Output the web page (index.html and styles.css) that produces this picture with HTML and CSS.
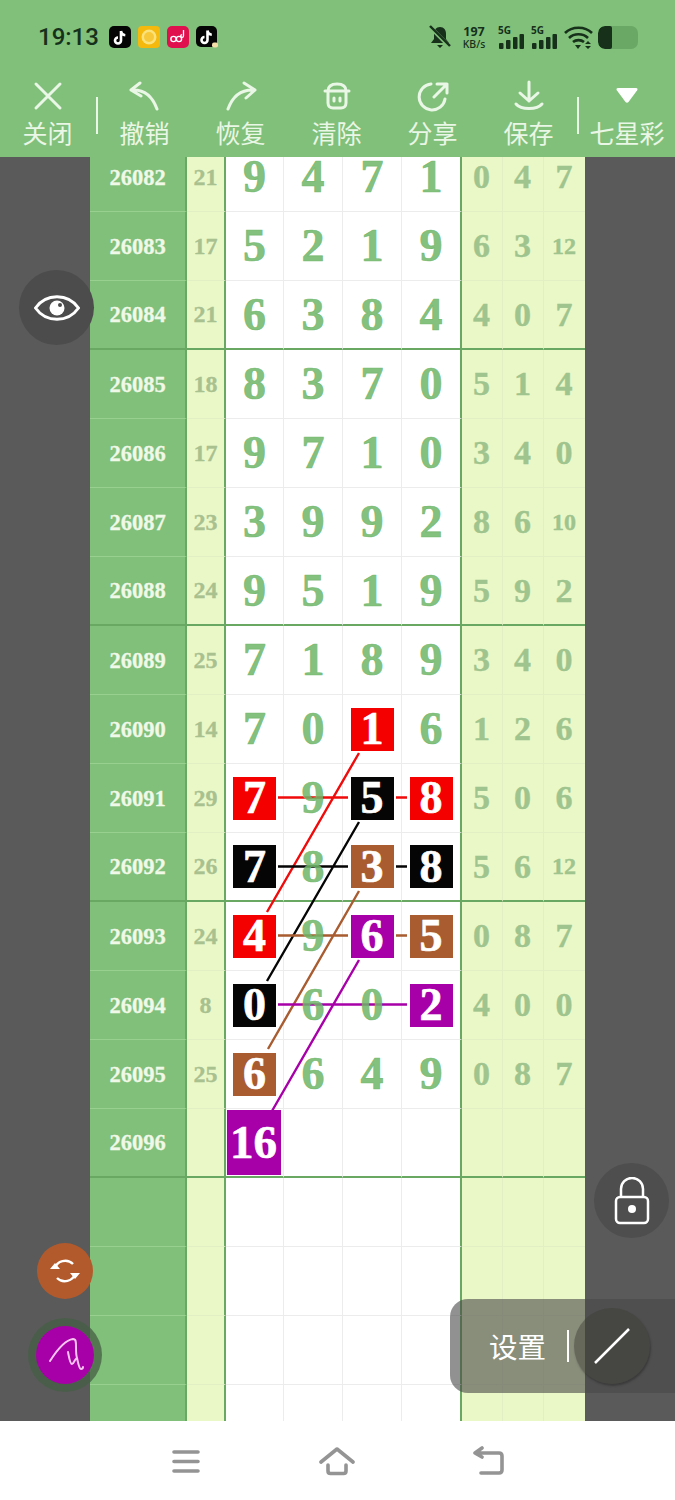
FILE: index.html
```html
<!DOCTYPE html>
<html lang="zh-CN">
<head>
  <meta charset="UTF-8" />
  <meta name="viewport" content="width=device-width, initial-scale=1.0" />
  <title>七星彩</title>
  <link rel="stylesheet" href="styles.css">
</head>
<body>
<div class="page">
  <header class="top">
    <div class="status">
      <span class="time">19:13</span>
      <div class="apps">
        <svg class="app" viewBox="0 0 22 22"><rect width="22" height="22" rx="5" fill="#050505"/><path d="M12 5v9.500a3 3 0 1 1-3-3M12 5c.3 2.600 2 4 4.300 4.200" fill="none" stroke="#fff" stroke-width="2.600"/></svg>
        <svg class="app" viewBox="0 0 22 22"><rect width="22" height="22" rx="4" fill="#f5b80c"/><circle cx="11" cy="11" r="7.500" fill="#fbe27a"/><circle cx="11" cy="11" r="5" fill="#f7c93a"/></svg>
        <svg class="app" viewBox="0 0 22 22"><rect width="22" height="22" rx="5" fill="#e0104f"/><circle cx="6.500" cy="13" r="2.600" fill="none" stroke="#fff" stroke-width="1.400"/><circle cx="12" cy="13" r="2.600" fill="none" stroke="#fff" stroke-width="1.400"/><path d="M16.500 4v6a1.400 1.400 0 1 1-1.400-1.400" fill="none" stroke="#fff" stroke-width="1.300"/></svg>
        <svg class="app" viewBox="0 0 22 22"><rect width="21" height="21" rx="5" fill="#050505"/><path d="M11.500 4.500v9.500a3 3 0 1 1-3-3M11.500 4.500c.3 2.600 2 4 4.300 4.200" fill="none" stroke="#fff" stroke-width="2.600"/><rect x="16" y="16.500" width="6" height="5" rx="2" fill="#f4dfa8"/></svg>
      </div>
      <div class="sys">
        <svg class="bell" width="22" height="24" viewBox="0 0 22 24"><path d="M11 2c-4 0-6 3-6 7v5l-3 4h18l-3-4V9c0-4-2-7-6-7z M8 20h6l-3 3z" fill="#16301a"/><path d="M1 2l20 20" stroke="#80c07a" stroke-width="4"/><path d="M1 1l20 20" stroke="#16301a" stroke-width="2.400"/></svg>
        <div class="speed"><span class="num">197</span><span class="unit">KB/s</span></div>
        <div class="sig"><span>5G</span><svg width="25" height="15" viewBox="0 0 25 15"><rect y="9" width="4.500" height="6" rx="1"/><rect x="7" y="6" width="4.500" height="9" rx="1"/><rect x="14" y="3" width="4.500" height="12" rx="1"/><rect x="20.500" width="4.500" height="15" rx="1"/></svg></div>
        <div class="sig"><span>5G</span><svg width="25" height="15" viewBox="0 0 25 15"><rect y="9" width="4.500" height="6" rx="1"/><rect x="7" y="6" width="4.500" height="9" rx="1"/><rect x="14" y="3" width="4.500" height="12" rx="1"/><rect x="20.500" width="4.500" height="15" rx="1"/></svg></div>
        <svg class="wifi" width="29" height="23" viewBox="0 0 29 23"><g fill="none" stroke="#16301a" stroke-width="2.600"><path d="M1 7c7-7 20-7 27 0"/><path d="M5 12c5-5 14-5 19 0"/><path d="M9 16c3-2.500 8-2.500 11 0"/></g><path d="M11 19h6l-3 4z" fill="#16301a"/><path d="M24 15l3 3h-6zM24 23l3-3h-6z" fill="#16301a"/></svg>
        <div class="battery"><div class="level"></div></div>
      </div>
    </div>
    <nav class="tools">
      <div class="tool first">
        <svg width="32" height="32" viewBox="0 0 32 32"><path d="M4 4l24 24M28 4L4 28"/></svg>
        <span>关闭</span>
      </div>
      <i class="sep"></i>
      <div class="tool">
        <svg width="32" height="32" viewBox="0 0 32 32"><path d="M11 3L2 10l10 6M2 10c12-1 21 5 26 19"/></svg>
        <span>撤销</span>
      </div>
      <div class="tool">
        <svg width="32" height="32" viewBox="0 0 32 32"><path d="M19 3l11 7-9 8M30 10C18 9 8 15 3 29"/></svg>
        <span>恢复</span>
      </div>
      <div class="tool">
        <svg width="32" height="32" viewBox="0 0 32 32"><path d="M4 11h24M7 11c0-5 3-7 9-7s9 2 9 7M7 11v12c0 3 2 5 5 5h8c3 0 5-2 5-5V11M13 18v3M19 18v3"/></svg>
        <span>清除</span>
      </div>
      <div class="tool">
        <svg width="32" height="32" viewBox="0 0 32 32"><path d="M14 4a13 13 0 1 0 14 15M20 4h10v9M30 4L17 17"/></svg>
        <span>分享</span>
      </div>
      <div class="tool">
        <svg width="32" height="32" viewBox="0 0 32 32"><path d="M16 2v19M7 13l9 8 9-8M3 24c5 6 21 6 26 0"/></svg>
        <span>保存</span>
      </div>
      <i class="sep"></i>
      <div class="tool">
        <svg width="32" height="32" viewBox="0 0 32 32"><path class="solid" d="M7 8h18c1.500 0 2 1 1.200 2.200L17.500 22c-.8 1-2.200 1-3 0L5.800 10.200C5 9 5.500 8 7 8z"/></svg>
        <span>七星彩</span>
      </div>
    </nav>
  </header>

  <main class="stage">
    <section class="sheet">
      <svg class="lines" viewBox="90 157 495 1264" width="495" height="1264">
        <g stroke="#f00a0a"><path d="M278 797.500H348M396 797.500H407M359 753L267 912"/></g>
        <g stroke="#050505"><path d="M278 866.500H348M396 866.500H407M359 822L267 981"/></g>
        <g stroke="#a85c30"><path d="M278 935.500H348M396 935.500H407M359 891L268 1049"/></g>
        <g stroke="#a800a8"><path d="M278 1004.500H407M359 960L272 1111"/></g>
      </svg>

      <div class="row"><div class="id">26082</div><div class="sum">21</div><div class="cell"><b>9</b></div><div class="cell"><b>4</b></div><div class="cell"><b>7</b></div><div class="cell"><b>1</b></div><div class="val">0</div><div class="val">4</div><div class="val">7</div></div>
      <div class="row"><div class="id">26083</div><div class="sum">17</div><div class="cell"><b>5</b></div><div class="cell"><b>2</b></div><div class="cell"><b>1</b></div><div class="cell"><b>9</b></div><div class="val">6</div><div class="val">3</div><div class="val wide">12</div></div>
      <div class="row end"><div class="id">26084</div><div class="sum">21</div><div class="cell"><b>6</b></div><div class="cell"><b>3</b></div><div class="cell"><b>8</b></div><div class="cell"><b>4</b></div><div class="val">4</div><div class="val">0</div><div class="val">7</div></div>
      <div class="row"><div class="id">26085</div><div class="sum">18</div><div class="cell"><b>8</b></div><div class="cell"><b>3</b></div><div class="cell"><b>7</b></div><div class="cell"><b>0</b></div><div class="val">5</div><div class="val">1</div><div class="val">4</div></div>
      <div class="row"><div class="id">26086</div><div class="sum">17</div><div class="cell"><b>9</b></div><div class="cell"><b>7</b></div><div class="cell"><b>1</b></div><div class="cell"><b>0</b></div><div class="val">3</div><div class="val">4</div><div class="val">0</div></div>
      <div class="row"><div class="id">26087</div><div class="sum">23</div><div class="cell"><b>3</b></div><div class="cell"><b>9</b></div><div class="cell"><b>9</b></div><div class="cell"><b>2</b></div><div class="val">8</div><div class="val">6</div><div class="val wide">10</div></div>
      <div class="row end"><div class="id">26088</div><div class="sum">24</div><div class="cell"><b>9</b></div><div class="cell"><b>5</b></div><div class="cell"><b>1</b></div><div class="cell"><b>9</b></div><div class="val">5</div><div class="val">9</div><div class="val">2</div></div>
      <div class="row"><div class="id">26089</div><div class="sum">25</div><div class="cell"><b>7</b></div><div class="cell"><b>1</b></div><div class="cell"><b>8</b></div><div class="cell"><b>9</b></div><div class="val">3</div><div class="val">4</div><div class="val">0</div></div>
      <div class="row"><div class="id">26090</div><div class="sum">14</div><div class="cell"><b>7</b></div><div class="cell"><b>0</b></div><div class="cell"><b class="mark red">1</b></div><div class="cell"><b>6</b></div><div class="val">1</div><div class="val">2</div><div class="val">6</div></div>
      <div class="row"><div class="id">26091</div><div class="sum">29</div><div class="cell"><b class="mark red">7</b></div><div class="cell"><b>9</b></div><div class="cell"><b class="mark black">5</b></div><div class="cell"><b class="mark red">8</b></div><div class="val">5</div><div class="val">0</div><div class="val">6</div></div>
      <div class="row end"><div class="id">26092</div><div class="sum">26</div><div class="cell"><b class="mark black">7</b></div><div class="cell"><b>8</b></div><div class="cell"><b class="mark brown">3</b></div><div class="cell"><b class="mark black">8</b></div><div class="val">5</div><div class="val">6</div><div class="val wide">12</div></div>
      <div class="row"><div class="id">26093</div><div class="sum">24</div><div class="cell"><b class="mark red">4</b></div><div class="cell"><b>9</b></div><div class="cell"><b class="mark purple">6</b></div><div class="cell"><b class="mark brown">5</b></div><div class="val">0</div><div class="val">8</div><div class="val">7</div></div>
      <div class="row"><div class="id">26094</div><div class="sum">8</div><div class="cell"><b class="mark black">0</b></div><div class="cell"><b>6</b></div><div class="cell"><b>0</b></div><div class="cell"><b class="mark purple">2</b></div><div class="val">4</div><div class="val">0</div><div class="val">0</div></div>
      <div class="row"><div class="id">26095</div><div class="sum">25</div><div class="cell"><b class="mark brown">6</b></div><div class="cell"><b>6</b></div><div class="cell"><b>4</b></div><div class="cell"><b>9</b></div><div class="val">0</div><div class="val">8</div><div class="val">7</div></div>
      <div class="row end"><div class="id">26096</div><div class="sum"></div><div class="cell"><b class="mark purple big">16</b></div><div class="cell"></div><div class="cell"></div><div class="cell"></div><div class="val"></div><div class="val"></div><div class="val"></div></div>
      <div class="row"><div class="id"></div><div class="sum"></div><div class="cell"></div><div class="cell"></div><div class="cell"></div><div class="cell"></div><div class="val"></div><div class="val"></div><div class="val"></div></div>
      <div class="row"><div class="id"></div><div class="sum"></div><div class="cell"></div><div class="cell"></div><div class="cell"></div><div class="cell"></div><div class="val"></div><div class="val"></div><div class="val"></div></div>
      <div class="row"><div class="id"></div><div class="sum"></div><div class="cell"></div><div class="cell"></div><div class="cell"></div><div class="cell"></div><div class="val"></div><div class="val"></div><div class="val"></div></div>
      <div class="row"><div class="id"></div><div class="sum"></div><div class="cell"></div><div class="cell"></div><div class="cell"></div><div class="cell"></div><div class="val"></div><div class="val"></div><div class="val"></div></div>
    </section>
  </main>

  <footer class="navbar">
    <svg width="30" height="26" viewBox="0 0 30 26"><path d="M3 4h24M3 13.500h24M3 23h24"/></svg>
    <svg width="36" height="30" viewBox="0 0 36 30"><path d="M2 16L18 3l16 13M9 19v6c0 1.500 1 2.500 2.500 2.500h13c1.500 0 2.500-1 2.500-2.500v-6"/></svg>
    <svg width="32" height="30" viewBox="0 0 32 30"><path d="M2 7h24c2 0 3 1 3 3v14c0 2-1 3-3 3H8M9 2L2 7l7 4"/></svg>
  </footer>

  <div class="float eye">
    <svg width="46" height="32" viewBox="0 0 46 32"><path d="M1.500 16C12 1 34 1 44.500 16 34 31 12 31 1.500 16z" fill="none" stroke="#fff" stroke-width="3"/><circle cx="23" cy="16" r="7.500" fill="#fff"/><circle cx="26" cy="13" r="2" fill="#4a4a4a"/></svg>
  </div>
  <div class="float lock">
    <svg width="36" height="48" viewBox="0 0 36 48"><path d="M7 20V12a11 11 0 0 1 22 0v8" fill="none" stroke="#fff" stroke-width="2.500"/><rect x="2" y="20" width="32" height="26" rx="4" fill="none" stroke="#fff" stroke-width="2.500"/><circle cx="18" cy="32" r="4" fill="#fff"/></svg>
  </div>
  <div class="float refresh">
    <svg width="32" height="28" viewBox="0 0 32 28"><g fill="none" stroke="#fff" stroke-width="2.400"><path d="M6 11C8 4 18 1 24 7"/><path d="M26 17c-2 7-12 10-18 4"/></g><path d="M1 12l5-6 5 6zM31 16l-5 6-5-6z" fill="#fff"/></svg>
  </div>
  <div class="float pen">
    <div class="pen-ball">
      <svg width="56" height="56" viewBox="0 0 56 56"><path d="M13 34C20 23 28 13 36 12c3 0 3 3 3 8 0 4 0 8 1 11M31 25c1 5 2 12 4 12s3-6 5-6c1 4 2 11 4 11 1 0 2-1 2-2" fill="none" stroke="#f7c6f0" stroke-width="2" stroke-linejoin="round" stroke-linecap="round"/></svg>
    </div>
  </div>
  <div class="panel">
    <span class="panel-text">设置</span>
    <i class="panel-sep"></i>
    <div class="pencil">
      <svg width="38" height="38" viewBox="0 0 38 38"><path d="M2 36L36 2" stroke="#fff" stroke-width="2.500"/></svg>
    </div>
  </div>
</div>
</body>
</html>
```

FILE: styles.css
```css
* { box-sizing: border-box; }
html, body { margin: 0; padding: 0; }
body { font-family: "Noto Sans CJK SC", "Noto Sans", sans-serif; background: #fff; }

.page { position: relative; width: 675px; height: 1500px; display: flex; flex-direction: column; overflow: hidden; }

/* top bar */
.top { flex: 0 0 157px; background: #80c07a; }
.status { height: 74px; display: flex; align-items: center; padding-left: 38px; color: #16301a; }
.time { font-family: Roboto, sans-serif; font-size: 24px; font-weight: 500; width: 71px; }
.apps { display: flex; gap: 7px; }
.app { width: 22px; height: 22px; display: block; }
.sys { margin-left: auto; margin-right: 37px; display: flex; align-items: center; }
.bell { margin-right: 9px; }
.speed { display: flex; flex-direction: column; align-items: center; width: 28px; font-family: "Noto Sans", sans-serif; margin-right: 11px; }
.speed .num { font-size: 12.500px; font-weight: 700; line-height: 13px; }
.speed .unit { font-size: 10.500px; font-weight: 500; line-height: 12px; }
.sig { position: relative; width: 25px; height: 24px; display: flex; align-items: flex-end; margin-right: 8px; font-family: "Noto Sans", sans-serif; font-size: 10px; font-weight: 700; line-height: 10px; }
.sig:nth-child(4) { margin-right: 7px; }
.sig span { position: absolute; left: -1px; top: 0; }
.sig svg { display: block; fill: #16301a; }
.wifi { margin-right: 5px; }
.battery { width: 40px; height: 23px; border-radius: 7px; background: #6aa866; overflow: hidden; }
.level { width: 14px; height: 23px; background: #16301a; border-radius: 7px 2px 2px 7px; }

.tools { height: 83px; display: flex; align-items: flex-start; color: #eaf6e6; }
.tool { flex: 0 0 96px; display: flex; flex-direction: column; align-items: center; }
.tool.first { flex-basis: 95px; }
.tool:last-child { flex-basis: 97px; }
.tool svg { display: block; margin-top: 6px; fill: none; stroke: #eaf6e6; stroke-width: 3; stroke-linecap: round; stroke-linejoin: round; }
.tool svg .solid { fill: #fff; stroke: none; }
.tool span { font-size: 25px; line-height: 36px; margin-top: 2px; }
.sep { flex: 0 0 1.500px; width: 1.500px; height: 37px; margin-top: 23px; background: #eaf6e6; margin-left: 0.500px; }
.sep:first-of-type { margin-left: 1px; margin-right: -1px; }

/* sheet */
.stage { flex: 1; background: #5a5a5a; padding: 0 90px; overflow: hidden; }
.sheet { position: relative; width: 495px; height: 1264px; overflow: hidden; background: #fff; }
.lines { position: absolute; left: 0; top: 0; z-index: 1; fill: none; stroke-width: 2.400; }
.row { display: grid; grid-template-columns: 97px 39px 58px 59px 59px 60px 41px 41px 41px; height: 69px; }
.row:first-of-type { margin-top: -14px; }
.row > div { display: flex; align-items: center; justify-content: center; font-family: "Liberation Serif", serif; font-weight: 700; border-bottom: 1px solid #ececec; }
.row > .id { background: #80c07a; color: #f0f8e8; font-size: 22.500px; -webkit-text-stroke: 0.300px #f0f8e8; padding-top: 1px; border-right: 2px solid #68a862; border-bottom-color: #98d090; }
.row > .sum { background: #eaf8c8; color: #a9c08f; font-size: 24px; -webkit-text-stroke: 0.300px #a9c08f; border-right: 2px solid #68a862; border-bottom-color: #e2eec4; }
.row > .cell { border-right: 1px solid #ececec; font-size: 46px; line-height: 1; }
.row > .cell:nth-child(6) { border-right: 2px solid #68a862; }
.row > .val { background: #eaf8c8; color: #9fc48d; font-size: 34px; -webkit-text-stroke: 0.400px #9fc48d; padding-right: 1px; border-right: 1px solid #e2eec4; border-bottom-color: #e2eec4; }
.row > .val.wide { font-size: 24px; }
.row > .val:last-child { border-right: 0; }
.row.end > div { border-bottom: 2px solid #68a862; }

.cell b { position: relative; z-index: 2; color: rgba(110, 182, 104, 0.85); -webkit-text-stroke: 0.700px rgba(110, 182, 104, 0.85); }
.cell b.mark { display: flex; align-items: center; justify-content: center; width: 43px; height: 43px; color: #fff; -webkit-text-stroke: 0.700px #fff; }
.cell b.big { width: 54px; height: 65px; margin-right: 2px; font-size: 47px; }
.red { background: #f40000; }
.black { background: #050505; }
.brown { background: #a85c30; }
.purple { background: #a800a8; }

/* bottom nav */
.navbar { flex: 0 0 79px; background: #fff; display: flex; align-items: center; justify-content: center; gap: 118px; }
.navbar svg { display: block; fill: none; stroke: #949494; stroke-width: 3.600; stroke-linecap: round; stroke-linejoin: round; }

/* floating buttons over the sheet */
.float { position: absolute; border-radius: 50%; display: flex; align-items: center; justify-content: center; z-index: 5; }
.eye { left: 19px; top: 270px; width: 75px; height: 75px; background: #4c4c4c; }
.lock { left: 594px; top: 1163px; width: 75px; height: 75px; background: #4e4e4e; }
.refresh { left: 37px; top: 1243px; width: 56px; height: 56px; background: #b35a2c; }
.pen { left: 28px; top: 1318px; width: 74px; height: 74px; background: rgba(70, 95, 70, 0.75); }
.pen-ball { width: 58px; height: 58px; border-radius: 50%; background: #a800a8; display: flex; align-items: center; justify-content: center; }
.panel { position: absolute; left: 450px; top: 1299px; width: 225px; height: 94px; border-radius: 18px 0 0 18px; background: rgba(72, 72, 72, 0.6); display: flex; align-items: center; z-index: 5; }
.panel-text { margin-left: 39px; color: #fff; font-size: 28.500px; line-height: 40px; }
.panel-sep { width: 2px; height: 32px; margin-left: 21px; background: #fff; }
.pencil { width: 76px; height: 76px; margin-left: 5px; border-radius: 50%; background: rgba(60, 60, 50, 0.45); box-shadow: 1px 2px 2px rgba(40, 40, 40, 0.5); display: flex; align-items: center; justify-content: center; }
```
